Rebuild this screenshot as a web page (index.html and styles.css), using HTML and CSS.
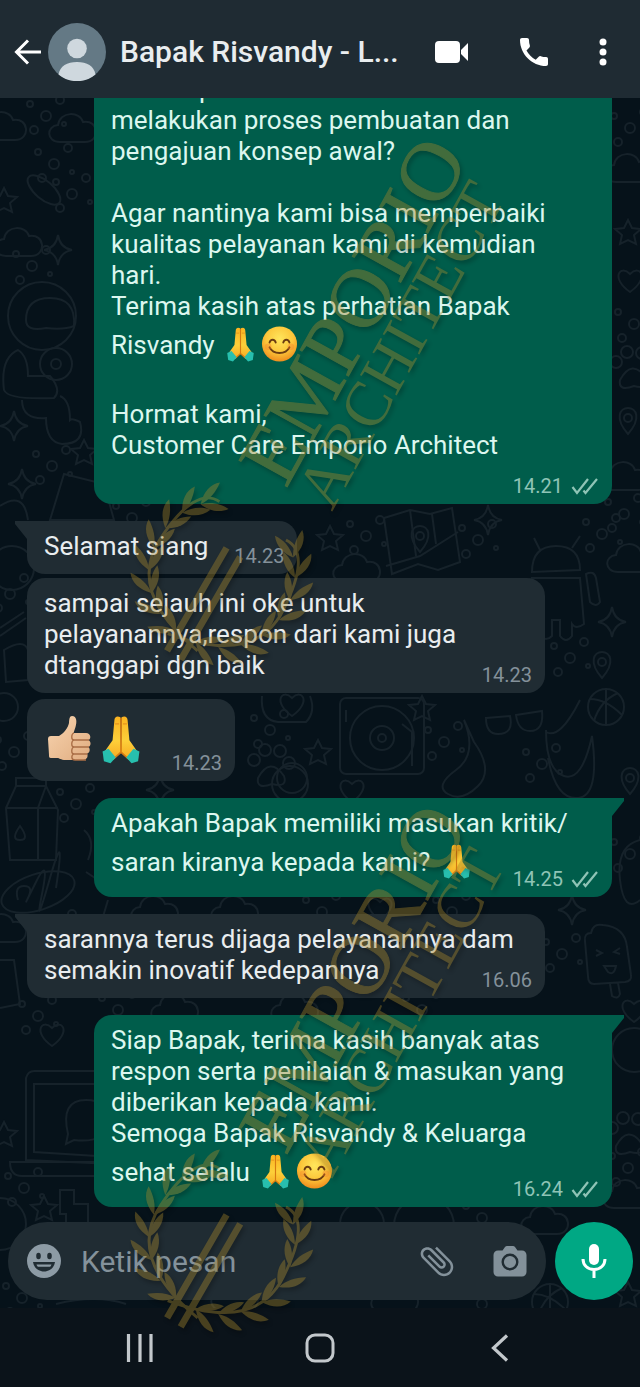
FILE: index.html
```
<!DOCTYPE html>
<html lang="id">
<head>
    <meta charset="UTF-8">
    <meta name="viewport" content="width=device-width, initial-scale=1.0">
    <title>Bapak Risvandy</title>
    <link rel="stylesheet" href="styles.css">
</head>
<body>

<!-- Shared shapes -->
<svg class="defs" width="0" height="0" aria-hidden="true">
    <defs>
        <linearGradient id="skin" x1="0" y1="0" x2="0" y2="1">
            <stop offset="0" stop-color="#fbb320"/><stop offset=".55" stop-color="#fdd03a"/><stop offset="1" stop-color="#f6a821"/>
        </linearGradient>
        <radialGradient id="face" cx=".5" cy=".35" r=".65">
            <stop offset="0" stop-color="#ffe65c"/><stop offset=".6" stop-color="#fcc63a"/><stop offset="1" stop-color="#ef8d1d"/>
        </radialGradient>
        <linearGradient id="thumb" x1="0" y1="0" x2="1" y2="1">
            <stop offset="0" stop-color="#f8d5b0"/><stop offset="1" stop-color="#e0ac80"/>
        </linearGradient>
        <symbol id="pray" viewBox="0 0 38 38">
            <path d="M18.6 2.5c-2.4-1.4-4.4-.5-4.6 2l-1.4 15.500L7 28l6 7 6-5.500z" fill="url(#skin)"/>
            <path d="M19.400 2.500c2.400-1.400 4.400-.5 4.600 2l1.400 15.500L31 28l-6 7-6-5.500z" fill="url(#skin)"/>
            <path d="M19 3v26l-5.500 5M19 29l5.500 5" fill="none" stroke="#d67a12" stroke-width="1.200"/>
            <path d="M14.500 7.500h3M20.500 7.500h3" stroke="#e8931c" stroke-width="1"/>
            <path d="M5 28.500l4.500-2 5.500 6.500-4 4.500-5-1.500z" fill="#27bfae"/>
            <path d="M33 28.500l-4.500-2-5.500 6.500 4 4.500 5-1.500z" fill="#27bfae"/>
        </symbol>
        <symbol id="smile" viewBox="0 0 38 38">
            <circle cx="19" cy="19" r="18.500" fill="url(#face)"/>
            <path d="M8.500 17.500c1-4 5.500-4 6.500 0M23 17.500c1-4 5.500-4 6.500 0M8.500 22.500c4 8 17 8 21 0" fill="none" stroke="#6b3d12" stroke-width="2" stroke-linecap="round"/>
            <circle cx="7" cy="22" r="3.500" fill="#f4772a" opacity=".35"/>
            <circle cx="31" cy="22" r="3.500" fill="#f4772a" opacity=".35"/>
        </symbol>
        <symbol id="thumbs" viewBox="0 0 46 50">
            <path d="M2 25c0-2 1-3 3-3h8c5-3 9-8 10-13 .3-4 .5-7 3-7 5 0 5 6 3.500 11l-2 6H40c5 0 5.500 6 2.500 7 3 2 2.500 6 0 7 2 2 1.500 6-1.500 6.500 1.500 2.500 0 6.500-4 6.500H20c-6 0-6-2-9-2H5c-2 0-2-1-2-3z" fill="url(#thumb)"/>
            <path d="M43 26H28c-3 0-3-6 0-7M43 33H28c-3 0-3-6 0-7M41.500 40H28c-3 0-3-6 0-7M40 46H29c-4 0-4-5-1-6" fill="none" stroke="#a96d45" stroke-width="1.300"/>
        </symbol>
        <symbol id="ticks" viewBox="0 0 28 18">
            <path d="M1.500 10l4.500 6L17 2M12.500 13.500l2 2.500L26 2" fill="none" stroke="currentColor" stroke-width="2.200"/>
        </symbol>
        <g id="leaves">
            <path d="M0 4C2-6 8-14 17-21 18-11 12-2 0 4z"/>
            <path d="M0 4C-8-2-14-12-12-23-5-17 0-8 0 4z"/>
        </g>
        <g id="branch">
            <path d="M-18 82Q78 66 74 0T40-64" fill="none" stroke="currentColor" stroke-width="3"/>
            <use href="#leaves" transform="rotate(78) translate(76 0)"/>
            <use href="#leaves" transform="rotate(60) translate(76 0)"/>
            <use href="#leaves" transform="rotate(42) translate(76 0)"/>
            <use href="#leaves" transform="rotate(24) translate(76 0)"/>
            <use href="#leaves" transform="rotate(6) translate(76 0)"/>
            <use href="#leaves" transform="rotate(-12) translate(76 0)"/>
            <use href="#leaves" transform="rotate(-30) translate(76 0)"/>
            <use href="#leaves" transform="rotate(-46) translate(76 0)"/>
        </g>
        <g id="logo">
            <text class="brand" transform="translate(286 489) rotate(-61)">EMPORIO</text>
            <text class="brand-sub" transform="translate(332 512) rotate(-61)">ARCHITECT</text>
            <g transform="translate(222 574) rotate(30) scale(.96)">
                <use href="#branch"/>
                <use href="#branch" transform="scale(-1 1)"/>
                <path d="M-13-26h7V98h-7zM4-25h7V99H4z"/>
            </g>
        </g>

        <!-- Wallpaper doodles -->
        <path id="d-star" d="M0-12l4 8 9 1-7 6 2 9-8-4-8 4 2-9-7-6 9-1z"/>
        <path id="d-spark" d="M0-15Q2-2 14 0 2 2 0 15-2 2-14 0-2-2 0-15z"/>
        <path id="d-heart" d="M0 12C-20-2-10-16 0-6 10-16 20-2 0 12z"/>
        <path id="d-cloud" d="M-18 12c-14 0-14-16-2-17 2-14 22-14 25-3 16-3 18 20 2 20z"/>
        <g id="d-dots"><circle cx="-14" cy="-8" r="3"/><circle cx="2" cy="4" r="5"/><circle cx="16" cy="-12" r="4"/><circle cx="20" cy="12" r="2"/><circle cx="-10" cy="18" r="4"/></g>
        <g id="d-pin"><path d="M0 14C-14-2-8-12 0-12S14-2 0 14z"/><circle cy="-2" r="4"/></g>
        <g id="d-pop"><path d="M-20 20l-3-35q-1-8 6-8 2-10 12-8 22 2 24 22l4 28q1 6-6 7l-31 2q-6 0-6-8zM2 28l2 12q6 4 8-2l-2-11"/><path d="M-12-6l6 3-6 3M12-8l-6 4 6 2M-4 10h12q-2 10-8 6z"/></g>
        <g id="d-milk"><path d="M-26-16l10-22h30l12 24-2 50h-46zM-26-16h52M14-38l-8 22v52M-16-38v-8h30v8"/><path d="M-12 2q-10 14 0 14t0-14z"/></g>
        <g id="d-disc"><circle r="32"/><circle r="12"/><circle r="4"/><rect x="-42" y="-40" width="84" height="76" rx="6"/><path d="M20-14l10 8v34M-36-28v12"/></g>
        <g id="d-astro"><circle cx="2" cy="-30" r="34"/><path d="M-14-26q0-22 24-22 26 0 24 28-10 4-28 2-20 4-20-8z"/><circle cx="16" cy="18" r="16"/><circle cx="16" cy="18" r="5"/><path d="M-22 4q-18 8-14 40 4 10 50 8 8-8-4-22h-22q0-20-10-26zM-18 54q0 20 24 18 0 24 16 26 24 0 18-22-8-4-10-2 0-20-10-24"/></g>
        <g id="d-map"><path d="M-36-28l26-8 20 4 22-6 8 54-22 8-20-6-26 10zM-34 20l34-10 38-24M-10-36l6 46M12-32l4 30"/><use href="#d-pin" y="-8"/></g>
        <g id="d-droid"><path d="M-26-10q0-26 24-26t24 24zM-18-32l-6-12M14-34l8-12M-26-4h48l4 46q-8 6-12 0v12q-6 8-12 0V38h-8v16q-6 6-12 0zM28-8q8-4 10 4l4 24q-4 6-10 0z"/></g>
        <g id="d-shades"><path d="M-28-6l24-2q4 18-12 18-12 0-12-16zM2-9l26-4q2 20-12 20-12 0-14-16z"/></g>
        <g id="d-ball"><circle r="18"/><path d="M-16-8q16 0 32 16M-12 14Q-6-6 12-14M0-18v36"/></g>
        <g id="d-laptop"><path d="M-54 44v-82q2-8 10-7h90q8 0 8 8v86zM-46 36v-68h94v74zM-70 46h136q-2 14-10 14h-114q-12 0-12-14z"/><path d="M-12 18q-8-34 18-34 22 0 22 20 0 24-34 20l-8 4z"/></g>
        <g id="d-bread"><ellipse rx="38" ry="18" transform="rotate(-18)"/><path d="M-20 8q-4-14 6-14t4 12 8-16 6 12 8-16 6 10"/></g>
        <g id="d-paw"><circle cx="-16" cy="-8" r="6"/><circle cx="-5" cy="-18" r="6"/><circle cx="10" cy="-17" r="6"/><circle cx="19" cy="-5" r="6"/><path d="M-12 10Q0-12 14 8 18 20 2 16-14 22-12 10z"/></g>
    </defs>
</svg>

<div class="phone">
    <header class="topbar">
        <button class="icon-btn back" aria-label="Kembali">
            <svg width="28" height="28" viewBox="0 0 28 28"><path d="M27 14H3M14 2.500L2.500 14 14 25.500" fill="none" stroke="#fff" stroke-width="3"/></svg>
        </button>
        <svg class="avatar" viewBox="0 0 58 58" aria-hidden="true">
            <circle cx="29" cy="29" r="29" fill="#647985"/>
            <circle cx="29" cy="25.500" r="9.800" fill="#cfd8de"/>
            <path d="M10.500 51.500C12 43 19 39 29 39s17 4 18.500 12.500a29 29 0 0 1-37 0z" fill="#cfd8de"/>
        </svg>
        <h1>Bapak Risvandy - L...</h1>
        <div class="actions">
            <button class="icon-btn" aria-label="Panggilan video">
                <svg width="36" height="28" viewBox="0 0 36 28"><rect x="1" y="3" width="25" height="22" rx="4" fill="#fff"/><path d="M27 12l7-7v18l-7-7z" fill="#fff"/></svg>
            </button>
            <button class="icon-btn" aria-label="Panggilan suara">
                <svg width="30" height="30" viewBox="0 0 30 30"><path d="M3 1h5c1.200 0 2 .8 2 2 0 2 .3 4 .9 5.600.2.700 0 1.400-.5 2L7.500 13.500c2.200 4 5.200 7 9.200 9.200l3-3c.5-.5 1.300-.7 2-.5 1.700.6 3.500.9 5.500.9 1.100 0 1.800.9 1.800 2v5c0 1.200-.8 2-2 2C13 29 1 17 1 3c0-1.200.8-2 2-2z" fill="#fff"/></svg>
            </button>
            <button class="icon-btn" aria-label="Menu">
                <svg width="10" height="28" viewBox="0 0 10 28"><g fill="#fff"><circle cx="5" cy="4" r="3.500"/><circle cx="5" cy="14" r="3.500"/><circle cx="5" cy="24" r="3.500"/></g></svg>
            </button>
        </div>
    </header>

    <main class="chat">
        <svg class="wallpaper" viewBox="0 98 640 1210" preserveAspectRatio="xMidYMin slice" aria-hidden="true">
            <use href="#d-cloud" x="8" y="128"/><use href="#d-dots" x="44" y="112"/><use href="#d-cloud" x="78" y="130"/>
            <use href="#d-dots" x="52" y="160"/><ellipse cx="44" cy="190" rx="20" ry="9" transform="rotate(40 44 190)"/>
            <use href="#d-star" x="4" y="200"/><use href="#d-dots" x="70" y="190"/><use href="#d-cloud" x="24" y="244"/>
            <use href="#d-spark" x="58" y="250"/><use href="#d-dots" x="30" y="262"/><use href="#d-astro" x="40" y="346"/>
            <use href="#d-spark" x="14" y="426"/><use href="#d-dots" x="50" y="462"/><use href="#d-star" x="84" y="452"/>
            <path d="M50 520l14-46 40 10 10 36zM0 506q24-16 28 14"/><use href="#d-spark" x="22" y="484"/>
            <use href="#d-star" x="628" y="232"/><use href="#d-dots" x="628" y="124"/><use href="#d-cloud" x="634" y="170"/>
            <use href="#d-heart" x="630" y="280"/><use href="#d-dots" x="632" y="320"/><use href="#d-paw" x="632" y="370"/>
            <use href="#d-pin" x="628" y="420"/><use href="#d-cloud" x="630" y="478"/><use href="#d-dots" x="622" y="510"/>

            <use href="#d-dots" x="130" y="514"/><use href="#d-star" x="330" y="538"/><use href="#d-dots" x="364" y="532"/>
            <use href="#d-cloud" x="362" y="570"/><use href="#d-map" x="420" y="546"/><use href="#d-dots" x="476" y="536"/>
            <use href="#d-spark" x="488" y="520"/><use href="#d-droid" x="558" y="582"/><use href="#d-dots" x="600" y="530"/>
            <use href="#d-spark" x="612" y="622"/><use href="#d-dots" x="568" y="654"/><use href="#d-pin" x="602" y="664"/>
            <use href="#d-cloud" x="636" y="560"/><use href="#d-ball" x="606" y="707"/><use href="#d-shades" x="514" y="724"/>
            <use href="#d-disc" x="382" y="738"/><use href="#d-star" x="422" y="708"/><use href="#d-heart" x="292" y="704"/>
            <path d="M262 696q-2 24 16 26h28q10-10 4-26"/><use href="#d-dots" x="268" y="726"/><use href="#d-star" x="318" y="752"/>
            <use href="#d-paw" x="270" y="768"/><circle cx="292" cy="778" r="15"/><use href="#d-heart" x="352" y="790"/>
            <path d="M464 720q14 34-8 50t-8 24 30-8-4-44zM546 730q0 40 18 46t28-40q8 60-14 62t-30-40M580 700q-20 40-34 32"/>
            <use href="#d-dots" x="442" y="738"/><use href="#d-dots" x="540" y="760"/><use href="#d-pin" x="630" y="780"/>
            <use href="#d-dots" x="8" y="590"/><path d="M0 628l24-16M0 636l26-18M4 650q20-12 24 0v30l-22 2z"/>
            <circle cx="4" cy="707" r="14"/><use href="#d-dots" x="12" y="748"/><circle cx="12" cy="568" r="22"/>

            <use href="#d-milk" x="32" y="824"/><use href="#d-bread" x="38" y="892"/><use href="#d-dots" x="74" y="800"/>
            <use href="#d-dots" x="56" y="926"/><use href="#d-spark" x="160" y="790"/><circle cx="290" cy="784" r="18"/>
            <path d="M84 830q12 10 4 30M86 872l12 8M96 940l12-40"/><use href="#d-cloud" x="240" y="912"/><use href="#d-cloud" x="160" y="912"/>
            <use href="#d-dots" x="320" y="908"/><use href="#d-dots" x="450" y="908"/><use href="#d-heart" x="380" y="908"/>
            <use href="#d-spark" x="572" y="910"/><use href="#d-dots" x="560" y="950"/><use href="#d-pop" x="608" y="956"/>
            <use href="#d-dots" x="628" y="850"/><path d="M640 840q-24 6-20 40t20 20"/><use href="#d-cloud" x="8" y="930"/>
            <path d="M0 960h14l6 44-20 4"/><use href="#d-heart" x="52" y="1034"/><use href="#d-dots" x="36" y="1012"/>
            <use href="#d-dots" x="116" y="1006"/><use href="#d-cloud" x="180" y="1010"/><use href="#d-cloud" x="300" y="1010"/>
            <use href="#d-dots" x="420" y="1006"/><use href="#d-laptop" x="80" y="1116"/><use href="#d-star" x="4" y="1134"/>
            <use href="#d-dots" x="22" y="1184"/><use href="#d-star" x="44" y="1208"/><circle cx="0" cy="1224" r="26"/>
            <path d="M60 1190h14v14h14v20H66v-10h-6z"/><circle cx="634" cy="1050" r="22"/><use href="#d-heart" x="634" y="1010"/>
            <use href="#d-paw" x="628" y="1136"/><use href="#d-dots" x="626" y="1164"/><use href="#d-cloud" x="632" y="1196"/>
            <circle cx="362" cy="1224" r="22"/><circle cx="424" cy="1226" r="30"/><use href="#d-dots" x="480" y="1214"/>
            <use href="#d-cloud" x="550" y="1222"/><use href="#d-dots" x="20" y="1294"/><path d="M56 1304q40-10 70 0"/>
            <use href="#d-cloud" x="240" y="1298"/><use href="#d-cloud" x="400" y="1300"/><use href="#d-ball" x="550" y="1302"/>
            <use href="#d-dots" x="480" y="1300"/><use href="#d-star" x="628" y="1294"/>
        </svg>

        <div class="messages">
            <div class="bubble sent">
                <p>dari Emporio Architect dalam saat<br>melakukan proses pembuatan dan<br>pengajuan konsep awal?<br><br>Agar nantinya kami bisa memperbaiki<br>kualitas pelayanan kami di kemudian<br>hari.<br>Terima kasih atas perhatian Bapak<br>Risvandy <svg class="emoji" role="img" aria-label="🙏"><use href="#pray"/></svg><svg class="emoji" role="img" aria-label="😊"><use href="#smile"/></svg><br><br>Hormat kami,<br>Customer Care Emporio Architect</p>
                <div class="meta own-line">14.21 <svg class="ticks" aria-label="Terkirim"><use href="#ticks"/></svg></div>
            </div>

            <div class="bubble received tail short first">
                <p>Selamat siang</p>
                <div class="meta">14.23</div>
            </div>
            <div class="bubble received">
                <p>sampai sejauh ini oke untuk<br>pelayanannya,respon dari kami juga<br>dtanggapi dgn baik</p>
                <div class="meta">14.23</div>
            </div>
            <div class="bubble received emoji-only">
                <p><svg class="emoji-big" role="img" aria-label="👍"><use href="#thumbs"/></svg><svg class="emoji-big" role="img" aria-label="🙏"><use href="#pray"/></svg></p>
                <div class="meta">14.23</div>
            </div>

            <div class="bubble sent tail first">
                <p>Apakah Bapak memiliki masukan kritik/<br>saran kiranya kepada kami? <svg class="emoji" role="img" aria-label="🙏"><use href="#pray"/></svg></p>
                <div class="meta">14.25 <svg class="ticks" aria-label="Terkirim"><use href="#ticks"/></svg></div>
            </div>

            <div class="bubble received tail first">
                <p>sarannya terus dijaga pelayanannya dam<br>semakin inovatif kedepannya</p>
                <div class="meta">16.06</div>
            </div>

            <div class="bubble sent tail first">
                <p>Siap Bapak, terima kasih banyak atas<br>respon serta penilaian &amp; masukan yang<br>diberikan kepada kami.<br>Semoga Bapak Risvandy &amp; Keluarga<br>sehat selalu <svg class="emoji" role="img" aria-label="🙏"><use href="#pray"/></svg><svg class="emoji" role="img" aria-label="😊"><use href="#smile"/></svg></p>
                <div class="meta">16.24 <svg class="ticks" aria-label="Terkirim"><use href="#ticks"/></svg></div>
            </div>
        </div>

        <form class="composer">
            <div class="field">
                <button type="button" class="icon-btn" aria-label="Emoji">
                    <svg width="34" height="34" viewBox="0 0 34 34"><circle cx="17" cy="17" r="17" fill="#8d9ba5"/><g fill="#202c33"><ellipse cx="11.500" cy="12" rx="2.300" ry="3.200"/><ellipse cx="22.500" cy="12" rx="2.300" ry="3.200"/><path d="M6 18h22c-1 6-5.500 9.500-11 9.500S7 24 6 18z"/></g><path d="M9.500 20.500h15c-.3 1-.8 1.700-1.300 2.300H10.800c-.6-.6-1-1.300-1.300-2.300z" fill="#8d9ba5"/></svg>
                </button>
                <input type="text" placeholder="Ketik pesan" aria-label="Ketik pesan">
                <button type="button" class="icon-btn" aria-label="Lampirkan">
                    <svg width="36" height="36" viewBox="0 0 24 24"><path transform="rotate(-45 12 12) translate(-1.500 -1.500) scale(1.120)" d="M16.500 6v11.500c0 2.210-1.790 4-4 4s-4-1.790-4-4V5a2.500 2.500 0 0 1 5 0v10.500c0 .55-.45 1-1 1s-1-.45-1-1V6H10v9.500a2.500 2.500 0 0 0 5 0V5c0-2.210-1.790-4-4-4S7 2.790 7 5v12.500c0 3.040 2.460 5.500 5.500 5.500s5.500-2.460 5.500-5.500V6h-1.500z" fill="#83919a"/></svg>
                </button>
                <button type="button" class="icon-btn" aria-label="Kamera">
                    <svg width="34" height="32" viewBox="0 0 34 32"><path d="M5 5.500h4.500L12 2c.6-.7 1.300-1 2-1h6c.8 0 1.500.3 2 1l2.500 3.500H29c2.500 0 4.500 2 4.500 4.500v17c0 2.500-2 4.500-4.500 4.500H5A4.500 4.500 0 0 1 .5 27V10C.5 7.500 2.500 5.500 5 5.500z" fill="#83919a"/><circle cx="17" cy="17" r="7.300" fill="#83919a" stroke="#202c33" stroke-width="2.400"/></svg>
                </button>
            </div>
            <button type="button" class="mic" aria-label="Rekam suara">
                <svg width="26" height="36" viewBox="0 0 26 36"><rect x="8" y="1" width="10" height="21" rx="5" fill="#fff"/><path d="M2 16c0 6 4.500 10.500 11 10.500S24 22 24 16M13 26v9" fill="none" stroke="#fff" stroke-width="3"/></svg>
            </button>
        </form>
    </main>

    <nav class="navbar">
        <button class="icon-btn" aria-label="Aplikasi terbaru">
            <svg width="28" height="28" viewBox="0 0 28 28"><path d="M2.500 0v28M14 0v28M25 0v28" stroke="#c3c8cc" stroke-width="3.200"/></svg>
        </button>
        <button class="icon-btn" aria-label="Beranda">
            <svg width="30" height="30" viewBox="0 0 30 30"><rect x="2" y="2" width="26" height="26" rx="8" fill="none" stroke="#c3c8cc" stroke-width="3"/></svg>
        </button>
        <button class="icon-btn" aria-label="Kembali">
            <svg width="20" height="28" viewBox="0 0 20 28"><path d="M17 1.500L3.500 14 17 26.500" fill="none" stroke="#c3c8cc" stroke-width="3.200"/></svg>
        </button>
    </nav>

    <svg class="watermark" viewBox="0 0 640 1387" preserveAspectRatio="xMidYMin meet" aria-hidden="true">
        <use href="#logo"/>
        <use href="#logo" y="667"/>
    </svg>
</div>

</body>
</html>
```
FILE: styles.css
```
* { box-sizing: border-box; }
html, body { height: 100%; }
body { margin: 0; background: #0b131a; color: #e9edef; font-family: Roboto, "Noto Sans", sans-serif; }
button, input { font: inherit; color: inherit; border: 0; background: none; padding: 0; margin: 0; }
svg { display: block; }
.defs { position: absolute; }

.phone { position: relative; display: flex; flex-direction: column; height: 100vh; overflow: hidden; }
.icon-btn { display: flex; align-items: center; justify-content: center; flex: none; cursor: pointer; }

/* Contact bar */
.topbar { position: relative; z-index: 1; flex: none; display: flex; align-items: center; height: 98px; padding: 6px 32px 0 14px; background: #1f2b33; }
.avatar { width: 58px; height: 58px; margin: 0 14px 0 6px; }
.topbar h1 { flex: 1; margin: 0; font-size: 30px; font-weight: 500; line-height: 36px; white-space: nowrap; }
.actions { display: flex; align-items: center; gap: 49px; }

/* Chat area */
.chat { position: relative; flex: 1; min-height: 0; display: flex; flex-direction: column; justify-content: flex-end; overflow: hidden; background: #06121a; }
.wallpaper { position: absolute; inset: 0; width: 100%; height: 100%; fill: none; stroke: #16222a; stroke-width: 2; }
.messages { position: relative; display: flex; flex-direction: column; gap: 4px; padding: 0 28px 15px 27px; }

.bubble { position: relative; width: calc(100% - 67px); padding: 10px 13px 6px 17px; border-radius: 18px; }
.bubble p { margin: 0; font-size: 26px; line-height: 31px; white-space: nowrap; }
.first { margin-top: 13px; }
.received { align-self: flex-start; background: #202c33; }
.sent { align-self: flex-end; background: #005d4b; color: #dcf7ef; }
.short, .emoji-only { width: auto; }
.short p { margin-right: 76px; }

/* Bubble tails */
.tail::before { content: ""; position: absolute; top: 0; width: 30px; height: 18px; background: inherit; }
.received.tail::before { left: -12px; clip-path: polygon(0 0, 100% 0, 100% 100%, 12px 100%, 0 3px); }
.sent.tail::before { right: -12px; clip-path: polygon(0 0, 100% 0, 100% 3px, 18px 100%, 0 100%); }

.meta { display: flex; align-items: center; justify-content: flex-end; gap: 8px; margin-top: -18px; font-size: 20px; line-height: 24px; color: #84919a; }
.own-line { margin-top: 13px; }
.sent .meta { color: #8fc4b6; }
.ticks { width: 28px; height: 18px; }

.emoji { display: inline-block; width: 39px; height: 36px; margin: 4px 0 6px; vertical-align: -14px; }
.emoji-only { margin-top: 2px; }
.emoji-only p { display: flex; gap: 2px; padding: 5px 76px 5px 0; }
.emoji-big { width: 50px; height: 50px; }

/* Message box */
.composer { position: relative; display: flex; align-items: center; gap: 9px; padding: 0 7px 8px 8px; }
.field { flex: 1; min-width: 0; display: flex; align-items: center; height: 78px; padding: 0 19px; border-radius: 39px; background: #202c33; }
.field input { flex: 1; min-width: 0; margin-left: 20px; font-size: 30px; outline: none; }
.field input::placeholder { color: #84929b; opacity: 1; }
.field input + .icon-btn { margin-right: 38px; }
.mic { flex: none; display: flex; align-items: center; justify-content: center; width: 78px; height: 78px; border-radius: 50%; background: #00a884; cursor: pointer; }

/* System navigation */
.navbar { flex: none; display: grid; grid-template-columns: repeat(3, 1fr); align-items: center; justify-items: center; height: 79px; padding: 0 50px; background: #0b131a; }

/* Brand overlay */
.watermark { position: absolute; z-index: 2; inset: 0; width: 100%; height: 100%; pointer-events: none; color: #a58428; fill: #a58428; opacity: .4; filter: drop-shadow(2px 3px 2px rgba(0, 0, 0, .6)); }
.brand { font: 84px "Liberation Serif", serif; stroke: currentColor; stroke-width: 1px; }
.brand-sub { font: 64px "Liberation Serif", serif; }
```
